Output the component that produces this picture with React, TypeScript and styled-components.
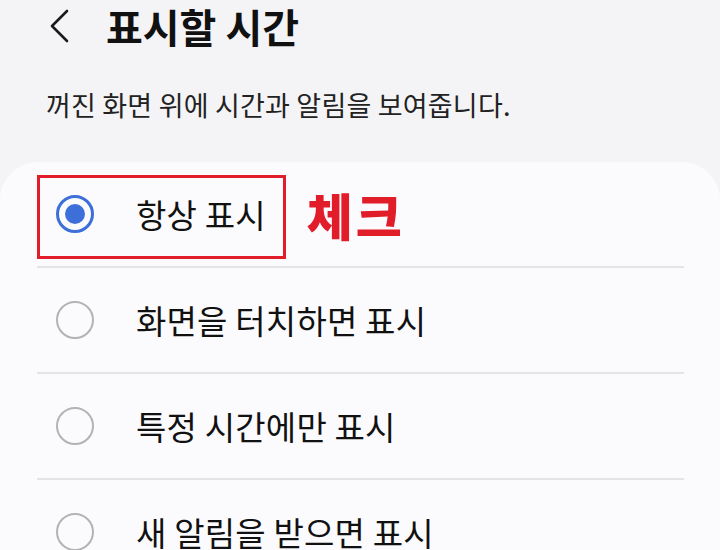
import React from "react";
import styled, { createGlobalStyle } from "styled-components";

const GlobalStyle = createGlobalStyle`
  html, body {
    margin: 0;
    padding: 0;
    background: #f4f4f6;
    font-family: "Noto Sans CJK KR", "Noto Sans", sans-serif;
    overflow: hidden;
  }
`;

const Page = styled.div`
  width: 720px;
  height: 550px;
  background: #f4f4f6;
  overflow: hidden;
`;

const Header = styled.header`
  display: flex;
  align-items: center;
  height: 52px;
  padding-left: 46px;
  gap: 34px;
`;

const BackButton = styled.button`
  display: flex;
  align-items: center;
  justify-content: center;
  width: 26px;
  height: 40px;
  padding: 0;
  border: none;
  background: none;
  color: #1a1a1a;
`;

const Title = styled.h1`
  margin: 0;
  font-size: 40px;
  line-height: 52px;
  font-weight: 700;
  color: #111;
`;

const Description = styled.p`
  margin: 36px 0 0;
  padding-left: 46px;
  font-size: 27px;
  color: #222;
  line-height: 34px;
  letter-spacing: 0.2px;
`;

const Card = styled.section`
  margin-top: 40px;
  background: #fbfbfd;
  border-radius: 38px 38px 0 0;
  padding: 0 36px 0 37px;
  height: 400px;
`;

const Row = styled.div<{ $last?: boolean }>`
  position: relative;
  display: flex;
  align-items: center;
  height: 104px;
  padding-left: 19px;
  border-bottom: ${({ $last }) => ($last ? "none" : "2px solid #e4e4e6")};
`;

const Radio = styled.span<{ $checked?: boolean }>`
  box-sizing: border-box;
  display: flex;
  align-items: center;
  justify-content: center;
  width: 38px;
  height: 38px;
  border-radius: 50%;
  border: ${({ $checked }) =>
    $checked ? "3.5px solid #3d6fd9" : "2.5px solid #b3b3b5"};

  &::after {
    content: "";
    display: ${({ $checked }) => ($checked ? "block" : "none")};
    width: 20px;
    height: 20px;
    border-radius: 50%;
    background: #3d6fd9;
  }
`;

const Label = styled.span`
  margin-left: 42px;
  font-size: 33px;
  color: #111;
  letter-spacing: 0.2px;
`;

const Highlight = styled.div`
  position: absolute;
  left: 0;
  top: 13px;
  width: 249px;
  height: 84px;
  box-sizing: border-box;
  border: 3.5px solid #e21d2a;
`;

const Note = styled.span`
  margin-left: 41px;
  font-size: 50px;
  line-height: 1;
  font-weight: 900;
  color: #e21d2a;
  letter-spacing: 3px;
`;

const options = [
  "항상 표시",
  "화면을 터치하면 표시",
  "특정 시간에만 표시",
  "새 알림을 받으면 표시",
];

const App = () => {
  return (
    <Page>
      <GlobalStyle />
      <Header>
        <BackButton aria-label="뒤로">
          <svg width="22" height="34" viewBox="0 0 22 34" fill="none">
            <path
              d="M19 2 L4 17 L19 32"
              stroke="#1a1a1a"
              strokeWidth="2.6"
              strokeLinecap="round"
              strokeLinejoin="round"
            />
          </svg>
        </BackButton>
        <Title>표시할 시간</Title>
      </Header>
      <Description>꺼진 화면 위에 시간과 알림을 보여줍니다.</Description>
      <Card>
        {options.map((label, i) => (
          <Row key={label} $last={i === options.length - 1}>
            <Radio $checked={i === 0} />
            <Label>{label}</Label>
            {i === 0 && (
              <>
                <Highlight />
                <Note>체크</Note>
              </>
            )}
          </Row>
        ))}
      </Card>
    </Page>
  );
};

export default App;
